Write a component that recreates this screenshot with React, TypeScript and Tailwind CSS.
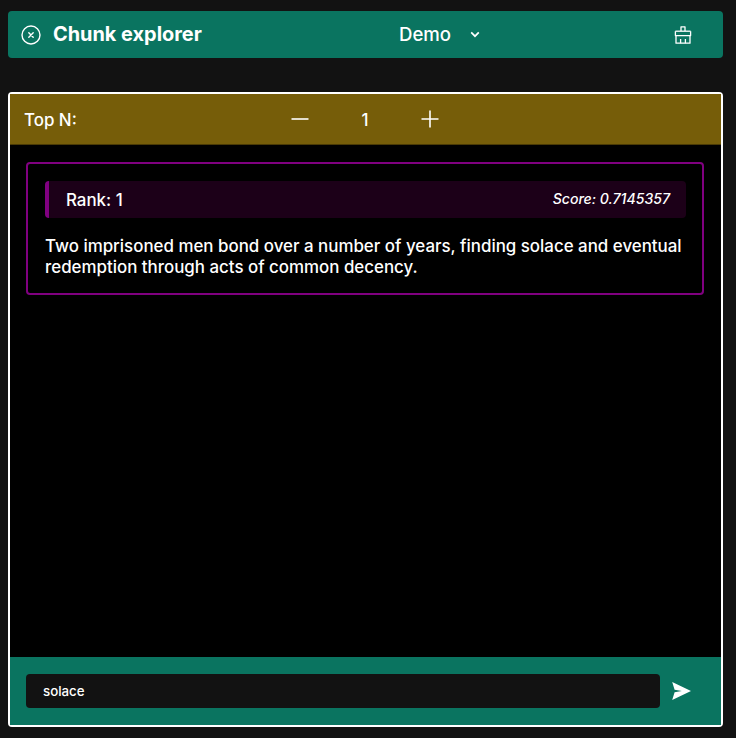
import React from "react";

function CloseCircle() {
  return (
    <svg width="20" height="20" viewBox="0 0 20 20" fill="none" stroke="white" strokeWidth="1.4" strokeLinecap="round">
      <circle cx="10" cy="10" r="9" />
      <path d="M7.8 7.8l4.4 4.4M12.2 7.8l-4.4 4.4" />
    </svg>
  );
}

function Broom() {
  return (
    <svg width="18" height="18" viewBox="0 0 18 18" fill="none" stroke="white" strokeWidth="1.3" strokeLinejoin="round">
      <path d="M7 5V0.8h4V5" />
      <path d="M1.4 5.2h15.2" />
      <path d="M1.4 5.2v4.4h15.2V5.2" />
      <path d="M2 9.6v7.6h14V9.6" />
      <path d="M6.6 17.2v-4.2M11.4 17.2v-4.2" />
    </svg>
  );
}

function Send() {
  return (
    <svg width="19" height="18" viewBox="0 0 19 18" fill="white">
      <path d="M0.2 0L19 9 0.2 18 2.6 10.2 9.8 9 2.6 7.8z" />
    </svg>
  );
}

function Chevron() {
  return (
    <svg width="10" height="7" viewBox="0 0 10 7" fill="none" stroke="white" strokeWidth="1.7">
      <path d="M1.2 1.4L5 5.2l3.8-3.8" />
    </svg>
  );
}

export default function App() {
  return (
    <div className="h-[738px] w-[736px] overflow-hidden bg-[#121212] pl-2 pr-[13px] pt-[11px] font-['Inter',sans-serif] text-white">
      <header className="flex h-[47px] items-center rounded bg-[#0a7460] pl-[13px]">
        <CloseCircle />
        <h1 className="ml-3 w-[346px] text-[19.9px] font-bold leading-none">Chunk explorer</h1>
        <span className="text-[18.6px] font-medium leading-none">Demo</span>
        <span className="ml-[19px]"><Chevron /></span>
        <span className="ml-[194px]"><Broom /></span>
      </header>

      <main className="mt-[34px] flex h-[635px] flex-col rounded border-2 border-white bg-black">
        <div className="flex h-[51px] shrink-0 items-center border-b border-[#4a3a05] bg-[#765d09] pl-[14px]">
          <span className="w-[267px] pt-[2px] text-[16.9px] font-medium leading-none">Top N:</span>
          <svg className="mt-[-1px]" width="18" height="18" viewBox="0 0 18 18" stroke="white" strokeWidth="1.6"><path d="M0.5 9h17" /></svg>
          <span className="w-[112px] pt-[2px] text-center text-[16.9px] font-medium leading-none">1</span>
          <svg width="18" height="18" viewBox="0 0 18 18" stroke="white" strokeWidth="1.6"><path d="M0.5 9h17M9 0.5v17" /></svg>
        </div>

        <div className="min-h-0 flex-1 pl-4 pr-[17px] pt-[17px]">
          <article className="flex h-[133px] flex-col rounded border-2 border-[#800080] pl-[17px] pr-4 pt-[17px]">
            <div className="flex h-[37px] items-center justify-between rounded border-l-4 border-[#800080] bg-[#1c0018] pl-[17px] pr-4">
              <span className="pt-[1px] text-[16.9px] font-medium leading-none">Rank: 1</span>
              <span className="text-[14.1px] font-medium italic leading-none">Score: 0.7145357</span>
            </div>
            <p className="mt-[18px] text-[16.9px] font-medium leading-[20.5px]">
              Two imprisoned men bond over a number of years, finding solace and eventual redemption through acts of common decency.
            </p>
          </article>
        </div>

        <form className="flex h-[68px] shrink-0 items-center bg-[#0a7460] pl-4">
          <input
            readOnly
            value="solace"
            className="h-[34px] w-[634px] rounded bg-[#121212] px-[17px] text-[13.3px] font-medium text-white outline-none"
          />
          <button type="button" className="ml-3 flex"><Send /></button>
        </form>
      </main>
    </div>
  );
}
